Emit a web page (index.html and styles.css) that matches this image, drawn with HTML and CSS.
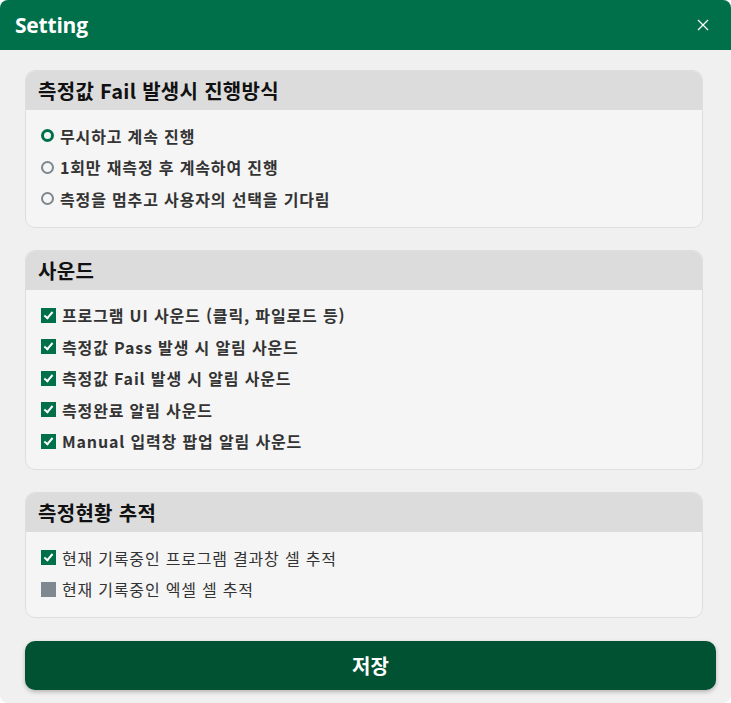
FILE: index.html
```html
<!DOCTYPE html>
<html lang="ko">
<head>
<meta charset="utf-8">
<title>Setting</title>
<link rel="stylesheet" href="styles.css">
</head>
<body>
<div class="dialog">
  <div class="titlebar">
    <span class="title">Setting</span>
    <span class="close">
      <svg width="12" height="12" viewBox="0 0 12 12"><path d="M1 1L11 11M11 1L1 11" stroke="#fff" stroke-width="1.3" fill="none"/></svg>
    </span>
  </div>
  <div class="content">
    <section class="card">
      <div class="card-head">측정값 Fail 발생시 진행방식</div>
      <div class="card-body">
        <div class="row bold"><span class="radio on"></span>무시하고 계속 진행</div>
        <div class="row bold"><span class="radio"></span>1회만 재측정 후 계속하여 진행</div>
        <div class="row bold"><span class="radio"></span>측정을 멈추고 사용자의 선택을 기다림</div>
      </div>
    </section>
    <section class="card">
      <div class="card-head">사운드</div>
      <div class="card-body">
        <div class="row bold"><span class="check on"></span>프로그램 UI 사운드 (클릭, 파일로드 등)</div>
        <div class="row bold"><span class="check on"></span>측정값 Pass 발생 시 알림 사운드</div>
        <div class="row bold"><span class="check on"></span>측정값 Fail 발생 시 알림 사운드</div>
        <div class="row bold"><span class="check on"></span>측정완료 알림 사운드</div>
        <div class="row bold"><span class="check on"></span>Manual 입력창 팝업 알림 사운드</div>
      </div>
    </section>
    <section class="card">
      <div class="card-head">측정현황 추적</div>
      <div class="card-body">
        <div class="row"><span class="check on"></span>현재 기록중인 프로그램 결과창 셀 추적</div>
        <div class="row"><span class="check"></span>현재 기록중인 엑셀 셀 추적</div>
      </div>
    </section>
    <button class="save">저장</button>
  </div>
</div>
</body>
</html>
```

FILE: styles.css
```css
html, body {
  margin: 0;
  padding: 0;
  background: #ffffff;
}
body {
  font-family: "Noto Sans CJK KR", "Noto Sans", sans-serif;
  width: 731px;
  height: 703px;
  overflow: hidden;
}
.dialog {
  width: 731px;
  height: 703px;
  background: #f0f0f0;
  border-radius: 8px;
  overflow: hidden;
  display: flex;
  flex-direction: column;
}
.titlebar {
  height: 50px;
  background: #00704a;
  display: flex;
  align-items: center;
  justify-content: space-between;
  padding: 0 22px 0 15px;
  flex-shrink: 0;
}
.title {
  color: #fff;
  font-family: "Open Sans", "Noto Sans", sans-serif;
  font-weight: 700;
  font-size: 21px;
  letter-spacing: -0.2px;
}
.close {
  display: flex;
  width: 12px;
  height: 12px;
}
.content {
  padding: 20px 15px 0 25px;
  display: flex;
  flex-direction: column;
}
.card {
  width: 678px;
  background: #f5f5f5;
  border: 1px solid #dedede;
  border-radius: 10px;
  overflow: hidden;
  box-sizing: border-box;
  margin-bottom: 22px;
}
.card:nth-of-type(3) {
  margin-bottom: 23px;
}
.card-head {
  height: 39px;
  background: #dcdcdc;
  display: flex;
  align-items: center;
  padding-left: 12px;
  font-size: 20px;
  font-weight: 700;
  color: #111;
  letter-spacing: 0.3px;
}
.card-body {
  padding: 10px 0 12px 15px;
}
.row {
  height: 31.5px;
  display: flex;
  align-items: center;
  font-size: 16px;
  color: #333;
  letter-spacing: 0.8px;
}
.row.bold {
  font-weight: 700;
  letter-spacing: 0.85px;
}
.radio {
  width: 13px;
  height: 13px;
  border: 2px solid #7f868e;
  border-radius: 50%;
  box-sizing: border-box;
  margin-right: 6px;
  flex-shrink: 0;
}
.radio.on {
  border: 3px solid #00704a;
}
.check {
  width: 15px;
  height: 15px;
  background: #7f8791;
  margin-right: 6px;
  flex-shrink: 0;
  position: relative;
}
.check.on {
  background: #00704a;
}
.check.on::after {
  content: "";
  position: absolute;
  left: 5px;
  top: 2px;
  width: 3px;
  height: 7px;
  border: solid #fff;
  border-width: 0 2px 2px 0;
  transform: rotate(40deg);
}
.save {
  width: 691px;
  height: 49px;
  background: #005232;
  color: #fff;
  border: none;
  border-radius: 10px;
  box-shadow: 0 2px 4px rgba(0, 0, 0, 0.25);
  font-family: "Noto Sans CJK KR", sans-serif;
  font-weight: 700;
  font-size: 20px;
  padding: 0;
}
```
